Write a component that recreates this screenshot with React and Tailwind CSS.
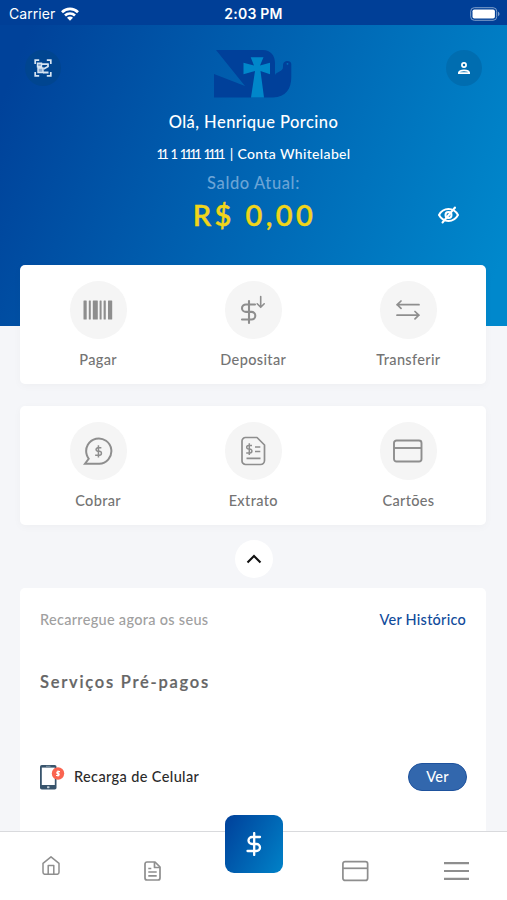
import React from "react";

const CardIcon = ({ className }) => (
  <svg className={className} viewBox="0 0 30 24" fill="none" stroke="currentColor" strokeWidth="1.9">
    <rect x="1" y="1.5" width="27.5" height="21" rx="2.5" />
    <path d="M1 9h27.5" />
  </svg>
);

const BarcodeIcon = () => (
  <svg className="w-[30px] h-5" viewBox="0 0 30 20" fill="currentColor">
    <rect x="0.5" y="0.5" width="3.2" height="19" rx="0.5" />
    <rect x="5.8" y="0.5" width="2" height="19" rx="0.5" />
    <rect x="9.8" y="0.5" width="5" height="19" rx="0.5" />
    <rect x="16.6" y="0.5" width="2" height="19" rx="0.5" />
    <rect x="20.6" y="0.5" width="2.2" height="19" rx="0.5" />
    <rect x="25" y="0.5" width="4.2" height="19" rx="0.5" />
  </svg>
);

const DepositIcon = () => (
  <svg className="w-[26px] h-[30px]" viewBox="0 0 26 30" fill="none" stroke="currentColor" strokeWidth="2.1" strokeLinecap="round" strokeLinejoin="round">
    <path d="M15 9.5H6a4 3.7 0 0 0 0 7.4H11.5a3.8 3.8 0 0 1 0 7.6H2M9 6v22" />
    <path d="M20.7 1.5v10.5M17.2 8.8l3.5 3.5 3.5-3.5" strokeWidth="1.6" />
  </svg>
);

const TransferIcon = () => (
  <svg className="w-6 h-[22px]" viewBox="0 0 24 22" fill="none" stroke="currentColor" strokeWidth="1.7" strokeLinecap="round" strokeLinejoin="round">
    <path d="M23 5.7H1M5 2L1.2 5.7l3.8 3.7" />
    <path d="M1 16.2h22M19 12.5l3.8 3.7-3.8 3.7" />
  </svg>
);

const ChargeIcon = () => (
  <svg className="w-[30px] h-[30px]" viewBox="0 0 30 30" fill="none" stroke="currentColor" strokeWidth="2">
    <path d="M2 27.700h14.200A12.600 12.600 0 1 0 3.800 19c.6 1.800 1.300 2.900 1.900 3.800z" />
    <g transform="translate(10.800 8.800) scale(.54)">
      <path d="M14 5.500H7a4 3.400 0 0 0 0 6.500H10.500a3.600 3.600 0 0 1 0 7.200H2.500M8.600 1v22.500" strokeWidth="2.800" />
    </g>
  </svg>
);

const StatementIcon = () => (
  <svg className="w-[25px] h-[30px]" viewBox="0 0 25 30" fill="none" stroke="currentColor" strokeWidth="1.7" strokeLinejoin="round">
    <path d="M4.500 1.500h11.500l7.500 7.500v15.500a4 4 0 0 1-4 4h-15a3.500 3.500 0 0 1-3.500-3.500V5a3.500 3.500 0 0 1 3.500-3.500z" />
    <path d="M11 9.500H7.500a1.800 1.800 0 0 0 0 3.600H9a1.900 1.900 0 0 1 0 3.800H5.200M8.300 7.300v11.600" strokeWidth="1.500" />
    <path d="M14 11h5.300M14 15.500h5.300M5.500 22.300h14" />
  </svg>
);

const ScanIcon = () => (
  <svg className="w-[18px] h-[18px]" viewBox="0 0 18 18" fill="none" stroke="#d6e4f2" strokeWidth="1.7">
    <path d="M1.200 5V1.200h4M12.800 1.200h4V5M16.800 13v3.800h-4M5.200 16.800h-4V13" />
    <path d="M3.500 4.200h4v3.500h-4zM4 9v4.500h5V9z" fill="#8aa9cf" strokeWidth="1.400" />
    <path d="M8 5.200h6.500M14 4.500v3L9.500 10M9 13.500h5.500" strokeWidth="1.800" />
  </svg>
);

const DoveLogo = () => (
  <svg className="w-[78px] h-12 -ml-px" viewBox="0 0 78 48">
    <path d="M2 0h47c7.500 0 12 5.500 12 13v12c1.500-3.500 8-3 8-8v-1.500C69 12 71.500 11 73.500 11s3.800 1 3.800 3v13c0 12-5.500 20-18.300 20.500H0V24l31 12z" fill="#00409a" />
    <circle cx="73.500" cy="13.800" r=".9" fill="#0072bd" />
    <path d="M36.700 7.300H49.500l-3.500 8.200 10-2.800v11.600l-9.500-3.300 3.500 26.500H37l4-26.500-11.500 3.300V12.700L40 15.500z" fill="#0087ca" />
  </svg>
);

const PhoneIcon = () => (
  <svg className="w-[25px] h-[26px]" viewBox="0 0 25 26">
    <rect x="0" y="1" width="16.500" height="24.500" rx="1.800" fill="#38546c" />
    <rect x="1.800" y="3.600" width="13" height="17.400" fill="#fff" />
    <path d="M6 2.300h4.500" stroke="#9fb2c1" strokeWidth=".7" />
    <rect x="7" y="22.200" width="2.500" height="2" rx=".6" fill="#c4d0da" />
    <circle cx="18" cy="9.500" r="6.200" fill="#fa6450" />
    <path d="M20 7.700h-2.500a1 1 0 0 0 0 1.900h1a1 1 0 0 1 0 1.900h-2.500M18 6.500v6" stroke="#fff" strokeWidth="1.200" fill="none" />
  </svg>
);

const Action = ({ label, children }) => (
  <button className="flex-1 flex flex-col items-center">
    <span className="w-[57px] h-[58px] rounded-full bg-[#f5f5f5] text-[#8e8e8e] flex items-center justify-center">
      {children}
    </span>
    <span className="mt-[11px] text-[14.5px] leading-5 tracking-[0.35px] text-[#747474]">{label}</span>
  </button>
);

const ActionCard = ({ children }) => (
  <div className="h-[119px] pt-[15.5px] pl-[0.5px] flex bg-white rounded-[5px] shadow-[0_2px_8px_rgba(0,0,0,0.03)]">
    {children}
  </div>
);

export default function App() {
  return (
    <div className="w-full h-[900px] overflow-hidden flex flex-col bg-[#f5f6f9] font-['Lato','Liberation_Sans',sans-serif] font-medium">
      {/* Status bar */}
      <div className="h-[25px] shrink-0 pl-[9px] pr-[7px] pt-[2px] grid grid-cols-3 items-center bg-[#003f97] text-white font-['Inter','Liberation_Sans',sans-serif]">
        <div className="flex items-center gap-[6px]">
          <span className="text-[14px] font-normal leading-none tracking-[0.05px]">Carrier</span>
          <svg className="w-[18px] h-[14px]" viewBox="0 0 18 14" fill="none" stroke="#fff" strokeWidth="2.7">
            <path d="M1 5.200a11.500 11.500 0 0 1 16 0M4 8.500a7.200 7.200 0 0 1 10 0" />
            <path d="M6 10.700a4.200 4.200 0 0 1 6 0L9 13.700z" fill="#fff" stroke="none" />
          </svg>
        </div>
        <span className="-ml-[2px] text-center text-[14px] font-semibold leading-none tracking-[0.25px] whitespace-nowrap">2:03 PM</span>
        <svg className="justify-self-end w-[30px] h-[14px]" viewBox="0 0 30 14">
          <rect x=".7" y=".7" width="26" height="12.600" rx="3.600" fill="none" stroke="#7f9fcb" />
          <rect x="2.500" y="2.500" width="22.400" height="9" rx="1.800" fill="#fff" />
          <path d="M28 4.800v4.400c1-.4 1.500-1.200 1.500-2.200s-.5-1.800-1.500-2.200z" fill="#7f9fcb" />
        </svg>
      </div>

      {/* Account header */}
      <header className="h-[301px] shrink-0 flex flex-col bg-[linear-gradient(112deg,#00429a_5%,#0088cc_95%)] text-white">
        <div className="h-[85px] px-[25px] pt-[25px] flex justify-between items-start">
          <button className="w-9 h-9 rounded-full bg-[#004590] flex items-center justify-center">
            <ScanIcon />
          </button>
          <DoveLogo />
          <button className="w-9 h-9 rounded-full bg-[#006db0] flex items-center justify-center">
            <svg className="w-3 h-3" viewBox="0 0 12 12" fill="none" stroke="#fff" strokeWidth="1.7">
              <circle cx="6" cy="3" r="2.100" />
              <path d="M.8 11.200c0-2 2.500-2.800 5.200-2.800s5.200.8 5.200 2.800z" />
            </svg>
          </button>
        </div>
        <p className="text-center text-[16.5px] leading-6 tracking-[0.45px]">Olá, Henrique Porcino</p>
        <p className="mt-2 flex justify-center gap-[5px] text-[14px] leading-6 tracking-[0.35px] whitespace-nowrap">
          <span className="text-[13px] tracking-[-2.75px] [word-spacing:4px]">11 1 1111 1111</span>
          <span className="ml-[2px]">| Conta Whitelabel</span>
        </p>
        <p className="mt-[5px] text-center text-[16.5px] leading-6 tracking-[0.6px] text-[#6ba4d6]">Saldo Atual:</p>
        <div className="mt-1 px-[48px] grid grid-cols-[1fr_auto_1fr] items-center">
          <span />
          <strong className="text-[29px] leading-8 font-semibold tracking-[3.4px] -mr-[2px] text-[#f0d519] [-webkit-text-stroke:0.4px_#f0d519] whitespace-nowrap">R$ 0,00</strong>
          <svg className="justify-self-end w-[21px] h-[18px]" viewBox="0 0 21 18" fill="none" stroke="#fff" strokeWidth="2" strokeLinecap="round">
            <path d="M1 9c2.200-4 5.500-6 9.500-6s7.300 2 9.500 6c-2.200 4-5.500 6-9.500 6S3.200 13 1 9z" />
            <circle cx="10.500" cy="9" r="3" />
            <path d="M4.500 16.500L17 1.500" />
          </svg>
        </div>
      </header>

      <main className="pl-5 pr-[21px] -mt-[61px] flex-1 min-h-0 flex flex-col">
        <ActionCard>
          <Action label="Pagar"><BarcodeIcon /></Action>
          <Action label="Depositar"><DepositIcon /></Action>
          <Action label="Transferir"><TransferIcon /></Action>
        </ActionCard>
        <div className="h-[22px]" />
        <ActionCard>
          <Action label="Cobrar"><ChargeIcon /></Action>
          <Action label="Extrato"><StatementIcon /></Action>
          <Action label="Cartões"><CardIcon className="w-[30px] h-6" /></Action>
        </ActionCard>

        <button className="self-center ml-[2px] mt-[15px] w-[38px] h-[38px] shrink-0 rounded-full bg-white flex items-center justify-center">
          <svg className="w-4 h-[10px]" viewBox="0 0 16 10" fill="none" stroke="#111" strokeWidth="2.1">
            <path d="M1.500 8.500L8 2l6.500 6.500" />
          </svg>
        </button>

        {/* Prepaid services */}
        <section className="mt-[10px] px-5 pt-[22px] flex-1 min-h-0 bg-white rounded-t-[5px]">
          <div className="flex justify-between text-[14.5px] leading-5">
            <span className="tracking-[0.3px] text-[#a0a0a0]">Recarregue agora os seus</span>
            <a className="tracking-[0.25px] text-[#104b9b]">Ver Histórico</a>
          </div>
          <h2 className="mt-[40px] text-[16.5px] leading-6 font-semibold tracking-[1.75px] text-[#666] [-webkit-text-stroke:0.2px_#666]">Serviços Pré-pagos</h2>
          <div className="mt-[69px] h-7 -mr-px flex items-center">
            <PhoneIcon />
            <span className="ml-[9px] flex-1 text-[14.5px] leading-5 tracking-[0.38px] text-[#2b2b2b]">Recarga de Celular</span>
            <button className="w-[59px] h-7 rounded-full bg-[#3267ad] border border-[#1e529d] text-white text-[14.5px] leading-5 tracking-[0.2px]">Ver</button>
          </div>
        </section>
      </main>

      {/* Bottom navigation */}
      <nav className="h-[69px] shrink-0 border-t border-[#d9dadd] bg-white text-[#8e8e8e] grid grid-cols-5 justify-items-center items-start">
        <svg className="mt-[24px] ml-px w-[18px] h-[19px]" viewBox="0 0 18 19" fill="none" stroke="currentColor" strokeWidth="1.5" strokeLinejoin="round">
          <path d="M1 7.300L9 .8l8 6.500v9a2 2 0 0 1-2 2H3a2 2 0 0 1-2-2z" />
          <path d="M6.200 18V9.500h5.600V18" />
        </svg>
        <svg className="mt-[29px] ml-px w-[17px] h-5" viewBox="0 0 17 20" fill="none" stroke="currentColor" strokeWidth="1.7" strokeLinejoin="round">
          <path d="M3 1h8l5 5v11a2 2 0 0 1-2 2H3a2 2 0 0 1-2-2V3a2 2 0 0 1 2-2z" />
          <path d="M10.500 1v5.500H16M4.300 7.500h3M4.300 11h8.400M4.300 14.800h8.400" />
        </svg>
        <button className="-mt-[17px] ml-px w-[58px] h-[58px] rounded-[9px] bg-[linear-gradient(120deg,#00409a,#0082c8)] flex items-center justify-center">
          <svg className="w-4 h-6" viewBox="0 0 16 24" fill="none" stroke="#fff" strokeWidth="2.3" strokeLinecap="round">
            <path d="M14 5H6a3.500 3.500 0 0 0 0 7h4.500a3.500 3.500 0 0 1 0 7H1.500M8.200 1v22" />
          </svg>
        </button>
        <CardIcon className="mt-[28px] ml-px w-[27px] h-[22px]" />
        <svg className="mt-[30px] w-[25px] h-[18px]" viewBox="0 0 25 18" stroke="currentColor" strokeWidth="2.2">
          <path d="M0 1.200h25M0 9h25M0 16.800h25" />
        </svg>
      </nav>
    </div>
  );
}
